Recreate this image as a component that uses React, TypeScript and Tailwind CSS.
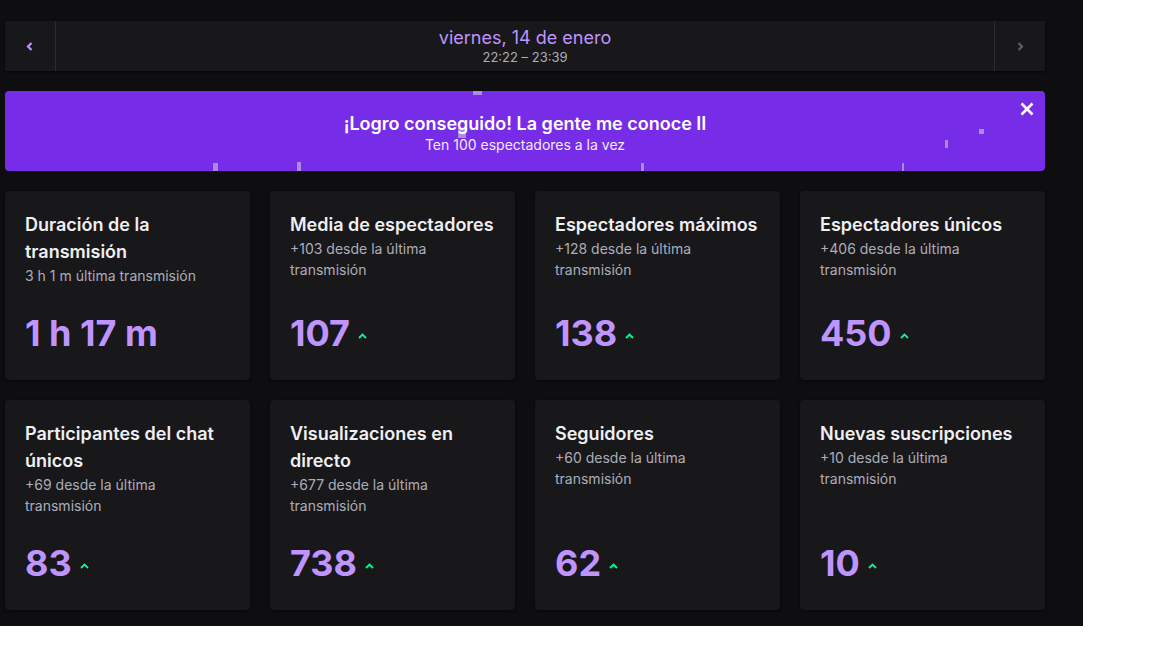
import React from "react";

type Stat = { title: string; sub: string; value: string; up?: boolean };

const stats: Stat[] = [
  { title: "Duración de la transmisión", sub: "3 h 1 m última transmisión", value: "1 h 17 m" },
  { title: "Media de espectadores", sub: "+103 desde la última transmisión", value: "107", up: true },
  { title: "Espectadores máximos", sub: "+128 desde la última transmisión", value: "138", up: true },
  { title: "Espectadores únicos", sub: "+406 desde la última transmisión", value: "450", up: true },
  { title: "Participantes del chat únicos", sub: "+69 desde la última transmisión", value: "83", up: true },
  { title: "Visualizaciones en directo", sub: "+677 desde la última transmisión", value: "738", up: true },
  { title: "Seguidores", sub: "+60 desde la última transmisión", value: "62", up: true },
  { title: "Nuevas suscripciones", sub: "+10 desde la última transmisión", value: "10", up: true },
];

// bits of confetti left over on the banner
const confetti = [
  { x: 468, y: 0, w: 9, h: 4 },
  { x: 453, y: 37, w: 8, h: 10 },
  { x: 208, y: 72, w: 5, h: 8 },
  { x: 292, y: 71, w: 4, h: 9 },
  { x: 636, y: 72, w: 3, h: 8 },
  { x: 940, y: 49, w: 3, h: 8 },
  { x: 974, y: 38, w: 5, h: 5 },
  { x: 897, y: 72, w: 2, h: 8 },
];

function Chevron({ dir, className }: { dir: "left" | "right"; className?: string }) {
  return (
    <svg width="8" height="9" viewBox="0 0 8 9" className={className}>
      <path
        d={dir === "left" ? "M5.5 1 L2 4.5 L5.5 8" : "M2.5 1 L6 4.5 L2.5 8"}
        fill="none"
        stroke="currentColor"
        strokeWidth="2.2"
      />
    </svg>
  );
}

function UpArrow() {
  return (
    <svg width="9" height="6" viewBox="0 0 9 6" className="mt-1.5 text-[#00f593]">
      <path d="M1 5 L4.5 1.6 L8 5" fill="none" stroke="currentColor" strokeWidth="2" />
    </svg>
  );
}

function StatCard({ stat }: { stat: Stat }) {
  return (
    <div className="flex flex-col rounded bg-[#18181b] px-5 pt-5 pb-[25px] shadow-[0_1px_3px_rgba(0,0,0,0.6)]">
      <div className="text-[18px] font-semibold leading-[27px] text-[#efeff1]">{stat.title}</div>
      <div className="text-[14px] leading-[21px] text-[#adadb8]">{stat.sub}</div>
      <div className="mt-auto flex items-center gap-2 pt-[25px]">
        <span className="text-[36px] font-bold leading-[44px] text-[#bf94ff]">{stat.value}</span>
        {stat.up && <UpArrow />}
      </div>
    </div>
  );
}

export default function App() {
  return (
    <div className="min-h-screen bg-white" style={{ fontFamily: "Inter, 'Noto Sans', sans-serif" }}>
      <div className="w-[1083px] h-[626px] bg-[#0e0e10] pl-[5px] pt-[21px]">
        <div className="w-[1040px]">
          {/* date switcher */}
          <div className="flex h-[50px] bg-[#18181b] shadow-[0_1px_2px_rgba(0,0,0,0.7)]">
            <button className="flex w-[51px] items-center justify-center border-r border-[#2c2c31] text-[#bf94ff]">
              <Chevron dir="left" />
            </button>
            <div className="flex flex-1 flex-col items-center justify-center pb-px">
              <div className="text-[18px] leading-[22px] text-[#bf94ff]">viernes, 14 de enero</div>
              <div className="text-[13px] leading-[16px] text-[#adadb8]">22:22 – 23:39</div>
            </div>
            <button className="flex w-[51px] items-center justify-center border-l border-[#2c2c31] text-[#5e5a70]">
              <Chevron dir="right" />
            </button>
          </div>

          {/* achievement banner */}
          <div className="relative mt-5 flex h-20 flex-col items-center justify-center overflow-hidden rounded bg-[#772ce8] pt-1 text-white">
            {confetti.map((c, i) => (
              <span
                key={i}
                className="absolute bg-[#a98ddc]"
                style={{ left: c.x, top: c.y, width: c.w, height: c.h }}
              />
            ))}
            <div className="relative text-[18px] font-semibold leading-[24px]">¡Logro conseguido! La gente me conoce II</div>
            <div className="relative text-[14px] leading-[18px] text-[#f1ebfd]">Ten 100 espectadores a la vez</div>
            <button className="absolute right-[11px] top-[11px]">
              <svg width="14" height="14" viewBox="0 0 14 14">
                <path d="M1.5 1.5 L12.5 12.5 M12.5 1.5 L1.5 12.5" stroke="white" strokeWidth="2.6" />
              </svg>
            </button>
          </div>

          {/* stats */}
          <div className="mt-5 grid grid-cols-4 gap-5">
            {stats.map((s) => (
              <StatCard key={s.title} stat={s} />
            ))}
          </div>
        </div>
      </div>
    </div>
  );
}
